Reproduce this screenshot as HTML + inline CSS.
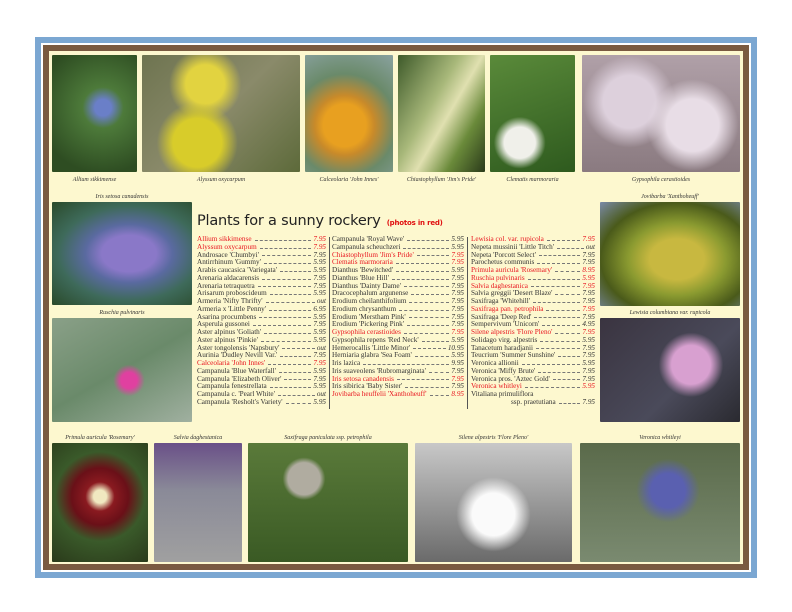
<!DOCTYPE html>
<html><head><meta charset="utf-8"><style>
*{margin:0;padding:0;box-sizing:border-box}
body{width:792px;height:612px;background:#fff;position:relative;overflow:hidden;font-family:"Liberation Serif",serif}
.blue{position:absolute;left:35px;top:37px;width:722px;height:541px;border:6px solid #7ba7d2;background:#fff}
.brown{position:absolute;left:43px;top:45px;width:706px;height:525px;border:6px solid #7a5a40;background:#fdf8cf}
.p{position:absolute;border-radius:1px}
.c{position:absolute;font-size:6px;color:#333;text-align:center;white-space:nowrap;font-style:italic}
h1{position:absolute;left:197px;top:213px;font-family:"DejaVu Sans",sans-serif;font-weight:normal;font-size:14.5px;color:#222;letter-spacing:-0.2px}
h1 span{font-size:7px;color:#e01010;font-weight:bold;margin-left:6px}
.col{position:absolute;top:236px;font-size:7.2px;line-height:7.75px;color:#333}
.r{display:flex;white-space:nowrap}
.r .f{flex:1;border-bottom:1px dashed #777;margin:0 2px 3px 3px}
.r .pr{font-style:italic}
.red{color:#e8141e}
.sep{position:absolute;width:1px;background:#555}
</style></head><body>
<div class="blue"></div>
<div class="brown"></div>

<div class="p" style="left:52px;top:55px;width:85px;height:117px;background:radial-gradient(circle at 60% 45%,#6a7fc8 0 10%,#4d7a3a 25%,#2e4d22 80%)"></div>
<div class="p" style="left:142px;top:55px;width:158px;height:117px;background:radial-gradient(circle at 35% 75%,#d8cc2a 0 18%,transparent 30%),radial-gradient(circle at 40% 25%,#e2d340 0 15%,transparent 28%),linear-gradient(135deg,#6e7450,#8a8a6a 50%,#5d6a3a)"></div>
<div class="p" style="left:305px;top:55px;width:88px;height:117px;background:radial-gradient(circle at 45% 60%,#e8a020 0 25%,#c88a2a 35%,#6a8a6a 60%,#8aa2a0)"></div>
<div class="p" style="left:398px;top:55px;width:87px;height:117px;background:linear-gradient(120deg,#3e5a2a,#a8b87a 40%,#e0e0b0 55%,#6a8a3a 75%,#2a3a1a)"></div>
<div class="p" style="left:490px;top:55px;width:85px;height:117px;background:radial-gradient(circle at 35% 75%,#f0f0ea 0 15%,transparent 25%),linear-gradient(160deg,#5a8a3a,#2e5a1e)"></div>
<div class="p" style="left:582px;top:55px;width:158px;height:117px;background:radial-gradient(circle at 70% 60%,#e8dde6 0 20%,transparent 35%),radial-gradient(circle at 30% 40%,#ddd0dc 0 20%,transparent 35%),linear-gradient(#b0a0a8,#8a7a80)"></div>
<div class="c" style="left:52px;top:177px;width:85px">Allium sikkimense</div>
<div class="c" style="left:142px;top:177px;width:158px">Alyssum oxycarpum</div>
<div class="c" style="left:305px;top:177px;width:88px">Calceolaria 'John Innes'</div>
<div class="c" style="left:398px;top:177px;width:87px">Chiastophyllum 'Jim's Pride'</div>
<div class="c" style="left:490px;top:177px;width:85px">Clematis marmoraria</div>
<div class="c" style="left:582px;top:177px;width:158px">Gypsophila cerastioides</div>

<div class="c" style="left:52px;top:194px;width:140px">Iris setosa canadensis</div>
<div class="p" style="left:52px;top:202px;width:140px;height:103px;background:radial-gradient(ellipse at 55% 50%,#8a78c8 0 25%,#5a6aa0 40%,#3e6a5a 65%,#2a4a2a)"></div>
<div class="c" style="left:52px;top:310px;width:140px">Ruschia pulvinaris</div>
<div class="p" style="left:52px;top:318px;width:140px;height:104px;background:radial-gradient(circle at 55% 60%,#e040a0 0 8%,transparent 16%),linear-gradient(150deg,#8aa088,#6a8a6a 50%,#a0b0a0)"></div>
<div class="c" style="left:600px;top:194px;width:140px">Jovibarba 'Xanthoheuff'</div>
<div class="p" style="left:600px;top:202px;width:140px;height:104px;background:radial-gradient(ellipse at 55% 55%,#c8b840 0 25%,#8a9a30 45%,#4a5a1a 70%,#7a8aa8)"></div>
<div class="c" style="left:600px;top:310px;width:140px">Lewisia columbiana var. rupicola</div>
<div class="p" style="left:600px;top:318px;width:140px;height:104px;background:radial-gradient(circle at 65% 45%,#d8a0d0 0 18%,transparent 30%),linear-gradient(135deg,#3a3440,#4a4a5a 60%,#2a2a30)"></div>

<div class="c" style="left:52px;top:435px;width:96px">Primula auricula 'Rosemary'</div>
<div class="c" style="left:154px;top:435px;width:88px">Salvia daghestanica</div>
<div class="c" style="left:248px;top:435px;width:160px">Saxifraga paniculata ssp. petrophila</div>
<div class="c" style="left:415px;top:435px;width:157px">Silene alpestris 'Flore Pleno'</div>
<div class="c" style="left:580px;top:435px;width:160px">Veronica whitleyi</div>
<div class="p" style="left:52px;top:443px;width:96px;height:119px;background:radial-gradient(circle at 50% 45%,#f0e8c0 0 8%,#8a1a20 18%,#6a1018 35%,#3a5a2a 55%,#2a3a1a)"></div>
<div class="p" style="left:154px;top:443px;width:88px;height:119px;background:linear-gradient(#6a5088,#8a8a98 40%,#a0a0a0)"></div>
<div class="p" style="left:248px;top:443px;width:160px;height:119px;background:radial-gradient(circle at 35% 30%,#b0aca0 0 12%,transparent 16%),linear-gradient(#5a7a3a,#3a5a24)"></div>
<div class="p" style="left:415px;top:443px;width:157px;height:119px;background:radial-gradient(circle at 50% 60%,#fafafa 0 20%,transparent 35%),linear-gradient(#c8c8c8,#909090 60%,#6a6a6a)"></div>
<div class="p" style="left:580px;top:443px;width:160px;height:119px;background:radial-gradient(circle at 55% 40%,#5a60b0 0 15%,transparent 28%),linear-gradient(#5a6a4a,#7a8a70)"></div>

<h1>Plants for a sunny rockery<span>(photos in red)</span></h1>
<div class="sep" style="left:329px;top:237px;height:172px"></div>
<div class="sep" style="left:467px;top:237px;height:172px"></div>

<div class="col" style="left:197px;width:129px">
<div class="r red"><span>Allium sikkimense</span><span class="f"></span><span class="pr">7.95</span></div>
<div class="r red"><span>Alyssum oxycarpum</span><span class="f"></span><span class="pr">7.95</span></div>
<div class="r"><span>Androsace 'Chumbyi'</span><span class="f"></span><span class="pr">7.95</span></div>
<div class="r"><span>Antirrhinum 'Gummy'</span><span class="f"></span><span class="pr">5.95</span></div>
<div class="r"><span>Arabis caucasica 'Variegata'</span><span class="f"></span><span class="pr">5.95</span></div>
<div class="r"><span>Arenaria aldacarensis</span><span class="f"></span><span class="pr">7.95</span></div>
<div class="r"><span>Arenaria tetraquetra</span><span class="f"></span><span class="pr">7.95</span></div>
<div class="r"><span>Arisarum proboscideum</span><span class="f"></span><span class="pr">5.95</span></div>
<div class="r"><span>Armeria 'Nifty Thrifty'</span><span class="f"></span><span class="pr">out</span></div>
<div class="r"><span>Armeria x 'Little Penny'</span><span class="f"></span><span class="pr">6.95</span></div>
<div class="r"><span>Asarina procumbens</span><span class="f"></span><span class="pr">5.95</span></div>
<div class="r"><span>Asperula gussonei</span><span class="f"></span><span class="pr">7.95</span></div>
<div class="r"><span>Aster alpinus 'Goliath'</span><span class="f"></span><span class="pr">5.95</span></div>
<div class="r"><span>Aster alpinus 'Pinkie'</span><span class="f"></span><span class="pr">5.95</span></div>
<div class="r"><span>Aster tongolensis 'Napsbury'</span><span class="f"></span><span class="pr">out</span></div>
<div class="r"><span>Aurinia 'Dudley Nevill Var.'</span><span class="f"></span><span class="pr">7.95</span></div>
<div class="r red"><span>Calceolaria 'John Innes'</span><span class="f"></span><span class="pr">7.95</span></div>
<div class="r"><span>Campanula 'Blue Waterfall'</span><span class="f"></span><span class="pr">5.95</span></div>
<div class="r"><span>Campanula 'Elizabeth Oliver'</span><span class="f"></span><span class="pr">7.95</span></div>
<div class="r"><span>Campanula fenestrellata</span><span class="f"></span><span class="pr">5.95</span></div>
<div class="r"><span>Campanula c. 'Pearl White'</span><span class="f"></span><span class="pr">out</span></div>
<div class="r"><span>Campanula 'Resholt's Variety'</span><span class="f"></span><span class="pr">5.95</span></div>
</div>

<div class="col" style="left:332px;width:132px">
<div class="r"><span>Campanula 'Royal Wave'</span><span class="f"></span><span class="pr">5.95</span></div>
<div class="r"><span>Campanula scheuchzeri</span><span class="f"></span><span class="pr">5.95</span></div>
<div class="r red"><span>Chiastophyllum 'Jim's Pride'</span><span class="f"></span><span class="pr">7.95</span></div>
<div class="r red"><span>Clematis marmoraria</span><span class="f"></span><span class="pr">7.95</span></div>
<div class="r"><span>Dianthus 'Bewitched'</span><span class="f"></span><span class="pr">5.95</span></div>
<div class="r"><span>Dianthus 'Blue Hill'</span><span class="f"></span><span class="pr">7.95</span></div>
<div class="r"><span>Dianthus 'Dainty Dame'</span><span class="f"></span><span class="pr">7.95</span></div>
<div class="r"><span>Dracocephalum argunense</span><span class="f"></span><span class="pr">7.95</span></div>
<div class="r"><span>Erodium cheilanthifolium</span><span class="f"></span><span class="pr">7.95</span></div>
<div class="r"><span>Erodium chrysanthum</span><span class="f"></span><span class="pr">7.95</span></div>
<div class="r"><span>Erodium 'Merstham Pink'</span><span class="f"></span><span class="pr">7.95</span></div>
<div class="r"><span>Erodium 'Pickering Pink'</span><span class="f"></span><span class="pr">7.95</span></div>
<div class="r red"><span>Gypsophila cerastioides</span><span class="f"></span><span class="pr">7.95</span></div>
<div class="r"><span>Gypsophila repens 'Red Neck'</span><span class="f"></span><span class="pr">5.95</span></div>
<div class="r"><span>Hemerocallis 'Little Minor'</span><span class="f"></span><span class="pr">10.95</span></div>
<div class="r"><span>Herniaria glabra 'Sea Foam'</span><span class="f"></span><span class="pr">5.95</span></div>
<div class="r"><span>Iris lazica</span><span class="f"></span><span class="pr">9.95</span></div>
<div class="r"><span>Iris suaveolens 'Rubromarginata'</span><span class="f"></span><span class="pr">7.95</span></div>
<div class="r red"><span>Iris setosa canadensis</span><span class="f"></span><span class="pr">7.95</span></div>
<div class="r"><span>Iris sibirica 'Baby Sister'</span><span class="f"></span><span class="pr">7.95</span></div>
<div class="r red"><span>Jovibarba heuffelii 'Xanthoheuff'</span><span class="f"></span><span class="pr">8.95</span></div>
</div>

<div class="col" style="left:471px;width:124px">
<div class="r red"><span>Lewisia col. var. rupicola</span><span class="f"></span><span class="pr">7.95</span></div>
<div class="r"><span>Nepeta mussinii 'Little Titch'</span><span class="f"></span><span class="pr">out</span></div>
<div class="r"><span>Nepeta 'Porcott Select'</span><span class="f"></span><span class="pr">7.95</span></div>
<div class="r"><span>Parochetus communis</span><span class="f"></span><span class="pr">7.95</span></div>
<div class="r red"><span>Primula auricula 'Rosemary'</span><span class="f"></span><span class="pr">8.95</span></div>
<div class="r red"><span>Ruschia pulvinaris</span><span class="f"></span><span class="pr">5.95</span></div>
<div class="r red"><span>Salvia daghestanica</span><span class="f"></span><span class="pr">7.95</span></div>
<div class="r"><span>Salvia greggii 'Desert Blaze'</span><span class="f"></span><span class="pr">7.95</span></div>
<div class="r"><span>Saxifraga 'Whitehill'</span><span class="f"></span><span class="pr">7.95</span></div>
<div class="r red"><span>Saxifraga pan. petrophila</span><span class="f"></span><span class="pr">7.95</span></div>
<div class="r"><span>Saxifraga 'Deep Red'</span><span class="f"></span><span class="pr">7.95</span></div>
<div class="r"><span>Sempervivum 'Unicorn'</span><span class="f"></span><span class="pr">4.95</span></div>
<div class="r red"><span>Silene alpestris 'Flore Pleno'</span><span class="f"></span><span class="pr">7.95</span></div>
<div class="r"><span>Solidago virg. alpestris</span><span class="f"></span><span class="pr">5.95</span></div>
<div class="r"><span>Tanacetum haradjanii</span><span class="f"></span><span class="pr">7.95</span></div>
<div class="r"><span>Teucrium 'Summer Sunshine'</span><span class="f"></span><span class="pr">7.95</span></div>
<div class="r"><span>Veronica allionii</span><span class="f"></span><span class="pr">5.95</span></div>
<div class="r"><span>Veronica 'Miffy Brute'</span><span class="f"></span><span class="pr">7.95</span></div>
<div class="r"><span>Veronica pros. 'Aztec Gold'</span><span class="f"></span><span class="pr">7.95</span></div>
<div class="r red"><span>Veronica whitleyi</span><span class="f"></span><span class="pr">5.95</span></div>
<div class="r"><span>Vitaliana primuliflora</span></div>
<div class="r"><span style="margin-left:40px">ssp. praetutiana</span><span class="f"></span><span class="pr">7.95</span></div>
</div>
</body></html>
